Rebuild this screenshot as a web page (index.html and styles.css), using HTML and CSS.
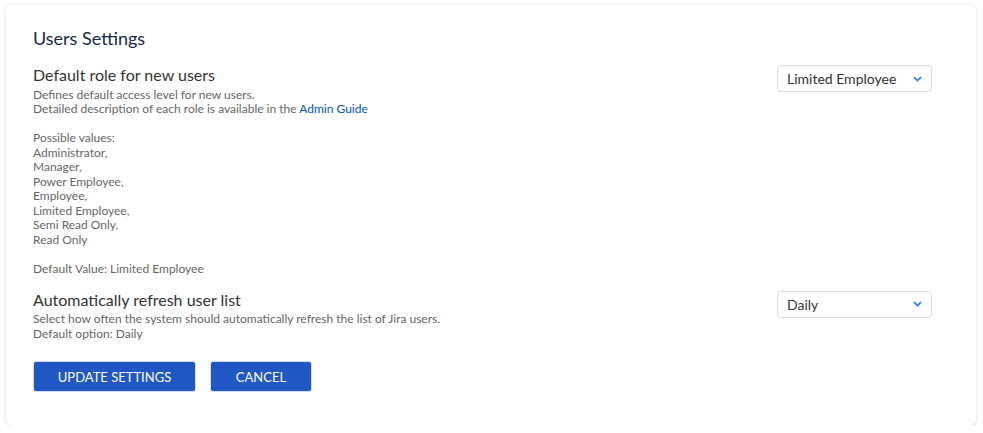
FILE: index.html
```html
<!DOCTYPE html>
<html>
<head>
<meta charset="utf-8">
<link rel="stylesheet" href="styles.css">
</head>
<body>
<div class="card">
  <h1 class="title">Users Settings</h1>
  <div class="setting">
    <div class="info">
      <h2 class="label">Default role for new users</h2>
      <p class="desc">Defines default access level for new users.<br>Detailed description of each role is available in the <a class="link" href="#">Admin Guide</a></p>
      <p class="desc gap">Possible values:<br>Administrator,<br>Manager,<br>Power Employee,<br>Employee,<br>Limited Employee,<br>Semi Read Only,<br>Read Only</p>
      <p class="desc gap">Default Value: Limited Employee</p>
    </div>
    <div class="select"><span>Limited Employee</span>
      <svg class="chev" width="9" height="6" viewBox="0 0 9 6"><path d="M1 1.2 L4.5 4.6 L8 1.2" fill="none" stroke="#2f7cf6" stroke-width="1.8"/></svg>
    </div>
  </div>
  <div class="setting second">
    <div class="info">
      <h2 class="label">Automatically refresh user list</h2>
      <p class="desc">Select how often the system should automatically refresh the list of Jira users.<br>Default option: Daily</p>
    </div>
    <div class="select"><span>Daily</span>
      <svg class="chev" width="9" height="6" viewBox="0 0 9 6"><path d="M1 1.2 L4.5 4.6 L8 1.2" fill="none" stroke="#2f7cf6" stroke-width="1.8"/></svg>
    </div>
  </div>
  <div class="actions">
    <button class="btn btn-update">UPDATE SETTINGS</button>
    <button class="btn btn-cancel">CANCEL</button>
  </div>
</div>
</body>
</html>
```
FILE: styles.css
```css
html, body { margin: 0; background: #ffffff; }
body { padding: 5px 7px 0 6px; font-family: Lato, "Open Sans", sans-serif; }
.card {
  box-sizing: border-box;
  height: 420px;
  background: #fff;
  border-radius: 5px;
  box-shadow: 0 0 4px rgba(0,0,0,0.12), 0 1px 2px rgba(0,0,0,0.06);
  padding: 21px 44px 0 27px;
}
.title {
  margin: 0;
  font-size: 18px;
  line-height: 25px;
  font-weight: 400;
  color: #172b4d;
}
.setting { display: flex; justify-content: space-between; align-items: flex-start; margin-top: 14px; }
.setting.second { margin-top: 13.5px; }
.setting.second .select { margin-top: 1px; }
.label { margin: 0; font-size: 16px; line-height: 20px; font-weight: 400; color: #333; }
.desc { margin: 2.5px 0 0; font-size: 12px; line-height: 14.5px; color: #666; }
.desc.gap { margin-top: 14.5px; }
.link { color: #0052cc; text-decoration: none; }
.select {
  box-sizing: border-box;
  width: 155px; height: 27px;
  border: 1px solid #dcdcdc; border-radius: 4px;
  display: flex; align-items: center; justify-content: space-between;
  padding: 0 9px 0 9px;
  font-size: 14px; color: #333;
}
.chev { display: block; }
.actions { display: flex; gap: 14px; margin-top: 20px; }
.btn {
  height: 31px;
  background: #1f57c5;
  color: #fff;
  border: 1px solid #d5dbe6;
  border-radius: 3px;
  font-family: Lato, sans-serif;
  font-size: 13px;
  padding: 0;
}
.btn-update { width: 163px; }
.btn-cancel { width: 102px; }
```
